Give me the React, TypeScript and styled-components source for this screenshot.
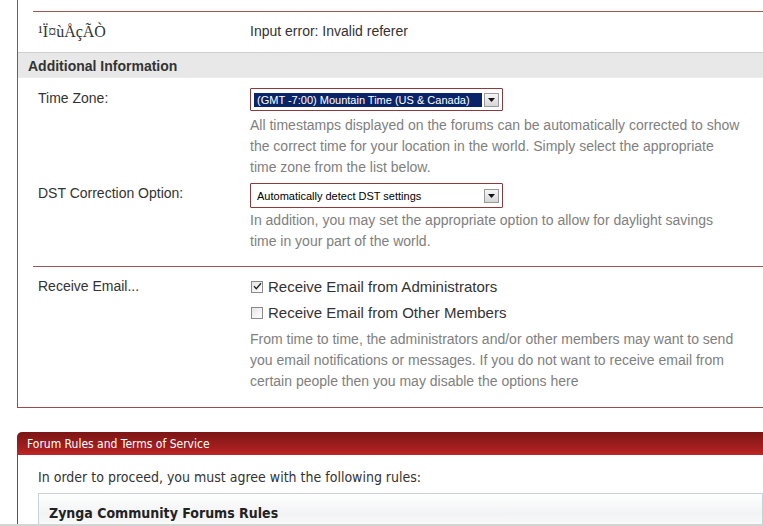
import styled, {createGlobalStyle} from "styled-components";

const GlobalStyle = createGlobalStyle`
	html, body {
		margin: 0;
		padding: 0;
		background: #fff;
		overflow: hidden;
	}
	body {
		font-family: "Liberation Sans", Arial, sans-serif;
		font-size: 14px;
		color: #333;
	}
`;

type SelectProps = {text: string; highlighted?: boolean; tall?: boolean};

function FakeSelect({text, highlighted, tall}: SelectProps) {
	return (
		<SelectBox tall={tall}>
			<SelectText highlighted={highlighted}>{text}</SelectText>
			<SelectArrow>
				<svg width="7" height="4" viewBox="0 0 7 4">
					<path d="M0 0h7L3.5 4z" fill="#111"/>
				</svg>
			</SelectArrow>
		</SelectBox>
	);
}

function CheckBox({checked}: {checked?: boolean}) {
	return (
		<Box>
			{checked && <svg width="9" height="9" viewBox="0 0 9 9">
				<path d="M1 4.3l2.3 2.4L8 1.3" stroke="#222" strokeWidth="1.3" fill="none"/>
			</svg>}
		</Box>
	);
}

export default function App() {
	return (
		<Page>
			<GlobalStyle/>
			<Panel>
				<TopFieldset>
					<InfoRow>
						<Label latin>¹Ï¤ùÅçÃÒ</Label>
						<Value>Input error: Invalid referer</Value>
					</InfoRow>
				</TopFieldset>

				<SectionHeader>Additional Information</SectionHeader>

				<Fieldset>
					<FieldRow gap={10}>
						<Label>Time Zone:</Label>
						<Value>
							<FakeSelect text="(GMT -7:00) Mountain Time (US & Canada)" highlighted/>
							<Description space={4}>
								All timestamps displayed on the forums can be automatically corrected to show<br/>
								the correct time for your location in the world. Simply select the appropriate<br/>
								time zone from the list below.
							</Description>
						</Value>
					</FieldRow>
					<FieldRow gap={5}>
						<Label>DST Correction Option:</Label>
						<Value>
							<FakeSelect text="Automatically detect DST settings" tall/>
							<Description space={2}>
								In addition, you may set the appropriate option to allow for daylight savings<br/>
								time in your part of the world.
							</Description>
						</Value>
					</FieldRow>
					<Separator/>
					<FieldRow gap={9}>
						<Label>Receive Email...</Label>
						<Value>
							<CheckLine><CheckBox checked/>Receive Email from Administrators</CheckLine>
							<CheckLine><CheckBox/>Receive Email from Other Members</CheckLine>
							<Description space={6}>
								From time to time, the administrators and/or other members may want to send<br/>
								you email notifications or messages. If you do not want to receive email from<br/>
								certain people then you may disable the options here
							</Description>
						</Value>
					</FieldRow>
				</Fieldset>
			</Panel>

			<RulesBlock>
				<RulesHeader>Forum Rules and Terms of Service</RulesHeader>
				<RulesBody>
					<RulesIntro>In order to proceed, you must agree with the following rules:</RulesIntro>
					<RulesBox>
						<RulesTitle>Zynga Community Forums Rules</RulesTitle>
					</RulesBox>
				</RulesBody>
			</RulesBlock>
			<BottomEdge/>
		</Page>
	);
}

const Page = styled.div`
	padding-left: 17px;
	width: 100%;
	height: 526px;
	box-sizing: border-box;
	position: relative;
	overflow: hidden;
`;

const Panel = styled.div`
	border-left: 1px solid #9a4a4a;
	border-bottom: 1px solid #9a4a4a;
	padding-top: 11px;
`;

const TopFieldset = styled.div`
	margin-left: 15px;
	border-top: 1px solid #a05555;
`;

const Fieldset = styled.div`
	margin-left: 15px;
	padding-bottom: 15px;
`;

const InfoRow = styled.div`
	display: grid;
	grid-template-columns: 212px 1fr;
	align-items: center;
	height: 40px;
	box-sizing: border-box;
	padding-left: 5px;
	padding-bottom: 2px;
`;

const FieldRow = styled.div<{gap: number}>`
	display: grid;
	grid-template-columns: 212px 1fr;
	padding-left: 5px;
	padding-top: ${p => p.gap}px;
`;

const Label = styled.div<{latin?: boolean}>`
	font-family: ${p => p.latin ? `"Liberation Serif", serif` : `inherit`};
	font-size: ${p => p.latin ? "16px" : "14px"};
	color: #333;
	line-height: 21px;
`;

const Value = styled.div`
	color: #333;
	line-height: 21px;
`;

const SectionHeader = styled.div`
	background: #e8e8e8;
	border-top: 1px solid #cfcfcf;
	border-bottom: 1px solid #ececec;
	height: 24px;
	line-height: 27px;
	padding-left: 10px;
	font-weight: bold;
	color: #333;
`;

const SelectBox = styled.div<{tall?: boolean}>`
	width: 245px;
	height: ${p => p.tall ? "23px" : "21px"};
	border: 1px solid #8e3a3a;
	border-radius: 1px;
	display: flex;
	align-items: center;
	padding-left: 3px;
	padding-right: 3px;
	gap: 2px;
`;

const SelectText = styled.div<{highlighted?: boolean}>`
	flex: 1;
	font-size: 11px;
	line-height: 14px;
	padding: 0 3px;
	background: ${p => p.highlighted ? "#0a246a" : "transparent"};
	color: ${p => p.highlighted ? "#fff" : "#000"};
	white-space: nowrap;
	overflow: hidden;
`;

const SelectArrow = styled.div`
	width: 15px;
	height: 14px;
	background: linear-gradient(#f6f6f6, #d6d6d6);
	border: 1px solid #9a9a9a;
	box-sizing: border-box;
	display: flex;
	align-items: center;
	justify-content: center;
`;

const Description = styled.div<{space: number}>`
	color: #808080;
	margin-top: ${p => p.space}px;
	line-height: 21px;
	white-space: nowrap;
`;

const Separator = styled.div`
	border-top: 1px solid #a05555;
	margin-top: 14px;
`;

const CheckLine = styled.div`
	display: flex;
	align-items: center;
	gap: 5px;
	height: 21px;
	margin-bottom: 5px;
	color: #333;
	font-size: 15px;
	&:nth-child(2) {
		margin-bottom: 0;
	}
`;

const Box = styled.div`
	width: 10px;
	height: 10px;
	border: 1px solid #8a8a8a;
	background: linear-gradient(135deg, #e4e4e4, #fff);
	display: flex;
	align-items: center;
	justify-content: center;
	margin-left: 1px;
`;

const RulesBlock = styled.div`
	margin-top: 24px;
`;

const RulesHeader = styled.div`
	height: 23px;
	background: linear-gradient(#7b1616, #a51e1e 70%, #c02626);
	border-top-left-radius: 5px;
	color: #fff;
	font-family: "DejaVu Sans Condensed", "Liberation Sans", sans-serif;
	font-size: 12px;
	line-height: 24px;
	padding-left: 10px;
`;

const RulesBody = styled.div`
	border-left: 1px solid #b03030;
	padding: 12px 0 0 20px;
`;

const RulesIntro = styled.div`
	font-family: "DejaVu Sans Condensed", "Liberation Sans", sans-serif;
	font-size: 14px;
	color: #333;
	line-height: 20px;
	margin-bottom: 6px;
`;

const RulesBox = styled.div`
	border: 1px solid #c9d1d9;
	border-bottom: none;
	background: linear-gradient(#fff, #f2f3f4 20px, #fff 40px);
	height: 40px;
	padding: 9px 0 0 10px;
`;

const RulesTitle = styled.div`
	font-family: "DejaVu Sans Condensed", "Liberation Sans", sans-serif;
	font-weight: bold;
	font-size: 14px;
	color: #222;
	line-height: 20px;
`;

const BottomEdge = styled.div`
	position: absolute;
	left: 0;
	right: 0;
	bottom: 0;
	height: 2px;
	background: #d4d4d4;
`;
